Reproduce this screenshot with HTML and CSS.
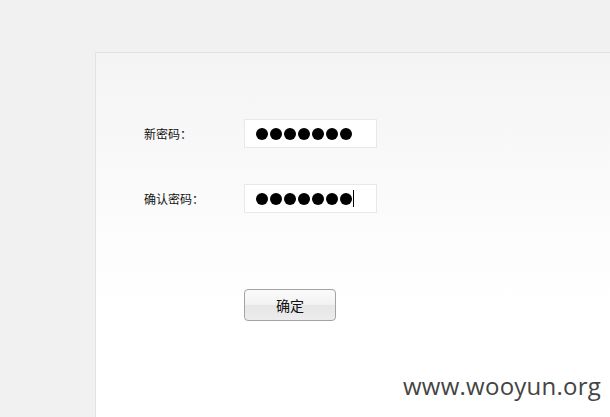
FILE: index.html
```html
<!DOCTYPE html>
<html>
<head>
<meta charset="utf-8">
<link rel="stylesheet" href="styles.css">
</head>
<body>
<div class="panel">
  <div class="row row-first">
    <span class="label">新密码：</span>
    <div class="field">
      <span class="dot"></span><span class="dot"></span><span class="dot"></span><span class="dot"></span><span class="dot"></span><span class="dot"></span><span class="dot"></span>
    </div>
  </div>
  <div class="row row-second">
    <span class="label">确认密码：</span>
    <div class="field">
      <span class="dot"></span><span class="dot"></span><span class="dot"></span><span class="dot"></span><span class="dot"></span><span class="dot"></span><span class="dot"></span><span class="caret"></span>
    </div>
  </div>
  <div class="actions">
    <button class="btn">确定</button>
  </div>
</div>
<div class="watermark">www.wooyun.org</div>
</body>
</html>
```

FILE: styles.css
```css
html, body {
  margin: 0;
  padding: 0;
  background: #f1f1f1;
  width: 610px;
  height: 417px;
  overflow: hidden;
  font-family: "Liberation Sans", "Noto Sans CJK SC", sans-serif;
}
body {
  padding: 52px 0 0 95px;
  box-sizing: border-box;
  position: relative;
}
.panel {
  width: 515px;
  height: 365px;
  border-top: 1px solid #e2e2e2;
  border-left: 1px solid #e2e2e2;
  background: linear-gradient(to bottom, #f4f4f4 0px, #fdfdfd 200px, #ffffff 260px);
  box-sizing: border-box;
  padding-left: 48px;
}
.row {
  display: flex;
  align-items: center;
  height: 29px;
}
.row-first { margin-top: 66px; }
.row-second { margin-top: 36px; }
.label {
  width: 100px;
  font-size: 12px;
  color: #111;
  font-family: "Noto Sans CJK SC", sans-serif;
}
.field {
  width: 133px;
  height: 29px;
  box-sizing: border-box;
  border: 1px solid #e8e8e8;
  background: #fff;
  display: flex;
  align-items: center;
  padding-left: 11px;
  gap: 2px;
}
.dot {
  width: 12px;
  height: 12px;
  border-radius: 50%;
  background: #000;
}
.caret {
  width: 1px;
  height: 17px;
  background: #000;
  margin-left: -1px;
}
.actions {
  margin-top: 76px;
  padding-left: 100px;
}
.btn {
  width: 92px;
  height: 32px;
  border: 1px solid #a3a3a3;
  border-radius: 4px;
  background: linear-gradient(to bottom, #fbfbfb 0%, #f2f2f2 48%, #e6e6e6 52%, #ececec 100%);
  font-family: "Noto Sans CJK SC", sans-serif;
  font-size: 14px;
  color: #111;
  padding: 0;
  display: block;
}
.watermark {
  position: absolute;
  left: 403px;
  top: 369px;
  font-family: "Open Sans", "DejaVu Sans", sans-serif;
  font-size: 24px;
  color: #444;
  letter-spacing: 0.25px;
  white-space: nowrap;
}
```
